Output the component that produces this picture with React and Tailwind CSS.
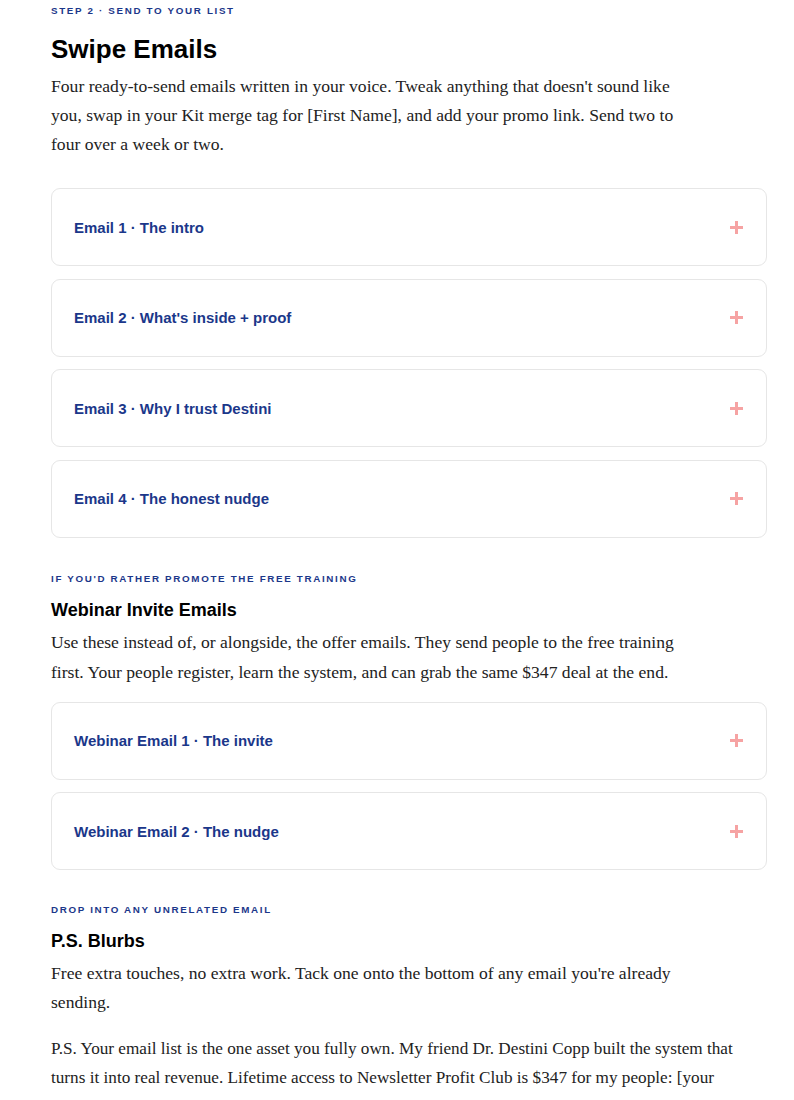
import React from "react";

const sans = { fontFamily: '"Liberation Sans", Arial, sans-serif' };
const serif = { fontFamily: '"Liberation Serif", "Times New Roman", serif' };

function Plus() {
  return (
    <svg width="13" height="13" viewBox="0 0 13 13" className="shrink-0">
      <rect x="5" y="0" width="3" height="13" fill="#f6a3a3" />
      <rect x="0" y="5" width="13" height="3" fill="#f6a3a3" />
    </svg>
  );
}

function Card({ title }) {
  return (
    <div className="flex h-[78px] items-center justify-between rounded-[9px] border border-[#e6e6e6] bg-white pl-[22px] pr-[23px]">
      <span className="pt-[2px] text-[15px] font-bold text-[#1b378a]" style={sans}>
        {title}
      </span>
      <Plus />
    </div>
  );
}

function Eyebrow({ children, className = "" }) {
  return (
    <div
      className={`text-[9.8px] font-bold uppercase tracking-[0.17em] text-[#1b378a] ${className}`}
      style={sans}
    >
      {children}
    </div>
  );
}

export default function App() {
  return (
    <div className="min-h-[1100px] bg-white pl-[51px] pr-[27px]">
      <Eyebrow className="pt-[5px] leading-[12px]">Step 2 · Send to your list</Eyebrow>
      <h1 className="mt-[17px] text-[26px] font-bold leading-[30px] text-black" style={sans}>
        Swipe Emails
      </h1>
      <p className="mt-[8px] max-w-[640px] text-[17.6px] leading-[29px] text-[#222]" style={serif}>
        Four ready-to-send emails written in your voice. Tweak anything that doesn't sound like
        you, swap in your Kit merge tag for [First Name], and add your promo link. Send two to
        four over a week or two.
      </p>

      <div className="mt-[29px] flex flex-col gap-[12.5px]">
        <Card title="Email 1 · The intro" />
        <Card title="Email 2 · What's inside + proof" />
        <Card title="Email 3 · Why I trust Destini" />
        <Card title="Email 4 · The honest nudge" />
      </div>

      <Eyebrow className="mt-[35px] leading-[12px]">If you'd rather promote the free training</Eyebrow>
      <h2 className="mt-[14px] text-[18px] font-bold leading-[22px] text-black" style={sans}>
        Webinar Invite Emails
      </h2>
      <p className="mt-[6px] max-w-[640px] text-[17.6px] leading-[30px] text-[#222]" style={serif}>
        Use these instead of, or alongside, the offer emails. They send people to the free training
        first. Your people register, learn the system, and can grab the same $347 deal at the end.
      </p>

      <div className="mt-[15px] flex flex-col gap-[12.5px]">
        <Card title="Webinar Email 1 · The invite" />
        <Card title="Webinar Email 2 · The nudge" />
      </div>

      <Eyebrow className="mt-[34px] leading-[12px]">Drop into any unrelated email</Eyebrow>
      <h2 className="mt-[14px] text-[18px] font-bold leading-[22px] text-black" style={sans}>
        P.S. Blurbs
      </h2>
      <p className="mt-[7px] max-w-[640px] text-[17.6px] leading-[29px] text-[#222]" style={serif}>
        Free extra touches, no extra work. Tack one onto the bottom of any email you're already
        sending.
      </p>
      <p className="mt-[17px] max-w-[705px] text-[17.2px] leading-[29px] text-[#222]" style={serif}>
        P.S. Your email list is the one asset you fully own. My friend Dr. Destini Copp built the
        system that turns it into real revenue. Lifetime access to Newsletter Profit Club is $347
        for my people: [your promo link]
      </p>
    </div>
  );
}
